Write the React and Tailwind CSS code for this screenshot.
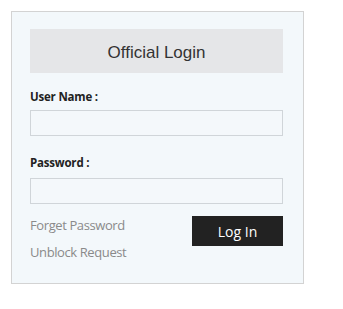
export default function App() {
  const ubu = { fontFamily: '"Open Sans", "DejaVu Sans", sans-serif' };
  return (
    <div className="w-[343px] h-[309px] bg-white pt-[11px] pl-[11px]">
      <div className="w-[293px] h-[273px] border border-[#d3d3d3] bg-[#f3f8fb] pt-[17px] pl-[18px] pr-[20px]">
        <div className="h-[44px] pt-[3px] bg-[#e5e6e8] flex items-center justify-center text-[17px] text-[#333]" style={{ fontFamily: '"Liberation Sans", Arial, sans-serif' }}>
          Official Login
        </div>
        <div style={ubu}>
          <div className="mt-[16px] h-[16px] leading-[16px] text-[11.5px] tracking-[-0.2px] font-bold text-[#222]">User Name :</div>
          <div className="mt-[5px] h-[26px] border border-[#d0d5d9] bg-[#f4f8fb]"></div>
          <div className="mt-[19px] h-[16px] leading-[16px] text-[11.5px] tracking-[-0.2px] font-bold text-[#222]">Password :</div>
          <div className="mt-[7px] h-[26px] border border-[#d0d5d9] bg-[#f4f8fb]"></div>
          <div className="mt-[10px] flex justify-between">
            <div className="flex flex-col text-[13px] tracking-[-0.4px] text-[#8a8a8a]">
              <span className="leading-[20px] mt-[1px]">Forget Password</span>
              <span className="leading-[20px] mt-[7px]">Unblock Request</span>
            </div>
            <button className="mt-[2px] w-[91px] h-[30px] bg-[#222] text-white text-[14px] flex items-center justify-center">Log In</button>
          </div>
        </div>
      </div>
    </div>
  );
}
